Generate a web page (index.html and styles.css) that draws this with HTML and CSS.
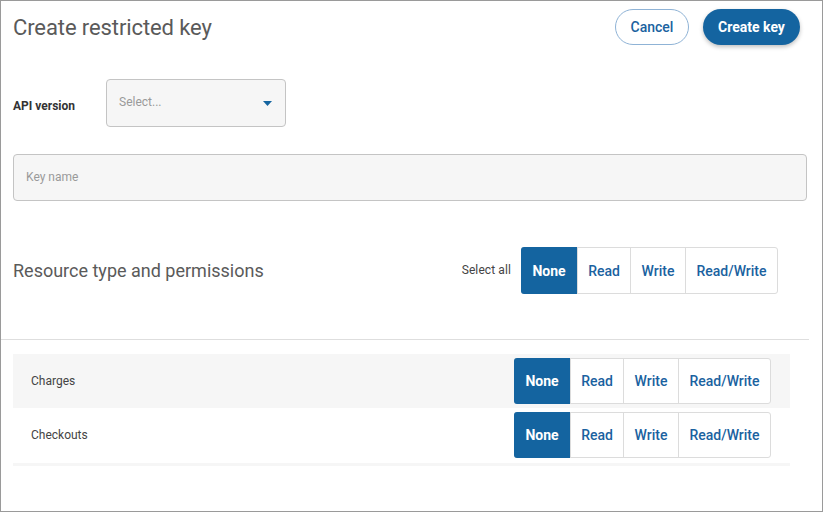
FILE: index.html
```html
<!DOCTYPE html>
<html>
<head>
<meta charset="utf-8">
<link rel="stylesheet" href="styles.css">
</head>
<body>
<div class="frame">
  <div class="header">
    <h1 class="title">Create restricted key</h1>
    <div class="actions">
      <button class="btn btn-outline">Cancel</button>
      <button class="btn btn-primary">Create key</button>
    </div>
  </div>

  <div class="api-row">
    <label class="api-label">API version</label>
    <div class="select">
      <span class="placeholder">Select...</span>
      <svg class="caret" width="9" height="5" viewBox="0 0 9 5"><path d="M0 0h9L4.5 5z" fill="#1565a0"/></svg>
    </div>
  </div>

  <div class="keyname"><span class="placeholder">Key name</span></div>

  <div class="res-head">
    <h2 class="res-title">Resource type and permissions</h2>
    <div class="select-all">
      <span class="sa-label">Select all</span>
      <div class="seg seg-lg">
        <span class="opt active">None</span>
        <span class="opt">Read</span>
        <span class="opt">Write</span>
        <span class="opt">Read/Write</span>
      </div>
    </div>
  </div>

  <div class="divider"></div>

  <div class="table">
    <div class="row shaded">
      <span class="row-name">Charges</span>
      <div class="seg">
        <span class="opt active">None</span>
        <span class="opt">Read</span>
        <span class="opt">Write</span>
        <span class="opt">Read/Write</span>
      </div>
    </div>
    <div class="row">
      <span class="row-name">Checkouts</span>
      <div class="seg">
        <span class="opt active">None</span>
        <span class="opt">Read</span>
        <span class="opt">Write</span>
        <span class="opt">Read/Write</span>
      </div>
    </div>
    <div class="strip"></div>
  </div>
</div>
</body>
</html>
```

FILE: styles.css
```css
* { box-sizing: border-box; }
html, body { margin: 0; padding: 0; background: #fff; }
body { font-family: Roboto, "Liberation Sans", sans-serif; color: #333; }

.frame {
  width: 823px;
  height: 512px;
  border: 1px solid #9a9a9a;
  overflow: hidden;
}

.header {
  display: flex;
  align-items: center;
  justify-content: space-between;
  height: 36px;
  margin-top: 8px;
  padding: 0 22px 0 12px;
}
.title {
  margin: 0;
  font-size: 22px;
  font-weight: 400;
  color: #5a5a5a;
  letter-spacing: -0.1px;
}
.actions { display: flex; gap: 14px; }
.btn {
  height: 36px;
  border-radius: 18px;
  font-family: Roboto, "Liberation Sans", sans-serif;
  font-size: 14px;
  font-weight: 700;
  padding: 0 14px;
  cursor: pointer;
}
.btn-outline {
  background: #fff;
  color: #1a62a0;
  border: 1px solid #8fb3d6;
  width: 74px;
  font-weight: 500;
}
.btn-primary {
  background: #1464a0;
  color: #fff;
  border: none;
  width: 97px;
  box-shadow: 0 2px 4px rgba(0,0,0,0.25);
}

.api-row {
  display: flex;
  align-items: center;
  margin-top: 34px;
  padding-left: 12px;
}
.api-label {
  width: 93px;
  font-size: 12px;
  font-weight: 700;
  color: #333;
  margin-top: 5px;
}
.select {
  width: 180px;
  height: 48px;
  background: #f6f6f6;
  border: 1px solid #c4c4c4;
  border-radius: 4px;
  display: flex;
  align-items: center;
  justify-content: space-between;
  padding: 0 13px 0 12px;
}
.select .placeholder { margin-top: -2px; }
.caret { display: block; }
.placeholder { font-size: 12px; color: #9a9a9a; }

.keyname {
  margin: 27px 15px 0 12px;
  height: 47px;
  background: #f6f6f6;
  border: 1px solid #c4c4c4;
  border-radius: 4px;
  display: flex;
  align-items: center;
  padding-left: 12px;
}
.keyname .placeholder { margin-top: -1px; }

.res-head {
  display: flex;
  align-items: center;
  justify-content: space-between;
  margin-top: 46px;
  padding: 0 44px 0 12px;
}
.res-title {
  margin: 0;
  font-size: 18px;
  font-weight: 400;
  color: #5a5a5a;
}
.select-all { display: flex; align-items: center; gap: 10px; }
.sa-label { font-size: 12px; color: #444; margin-top: -2px; letter-spacing: 0.1px; }

.seg {
  display: flex;
  height: 46px;
  border: 1px solid #dcdcdc;
  border-radius: 3px;
  background: #fff;
}
.seg-lg { height: 47px; }
.opt {
  display: flex;
  align-items: center;
  justify-content: center;
  padding: 0 8px;
  font-size: 14px;
  font-weight: 500;
  color: #1a62a0;
  border-left: 1px solid #dcdcdc;
}
.opt:first-child { border-left: none; }
.opt.active {
  background: #1464a0;
  color: #fff;
  font-weight: 700;
  margin: -1px 0 -1px -1px;
  border-radius: 3px 0 0 3px;
  width: 56px;
}
.opt:nth-child(2) { width: 53px; }
.opt:nth-child(3) { width: 55px; }
.opt:nth-child(4) { width: 92px; }

.divider {
  margin-top: 45px;
  width: 808px;
  height: 1px;
  background: #dedede;
}

.table {
  margin: 14px 32px 0 12px;
}
.row {
  display: flex;
  align-items: center;
  justify-content: space-between;
  height: 54px;
  padding: 0 19px 0 18px;
}
.row.shaded { background: #f6f6f6; }
.row-name { font-size: 12px; color: #444; }
.strip { height: 3px; margin-top: 1px; background: #f6f6f6; }
```
